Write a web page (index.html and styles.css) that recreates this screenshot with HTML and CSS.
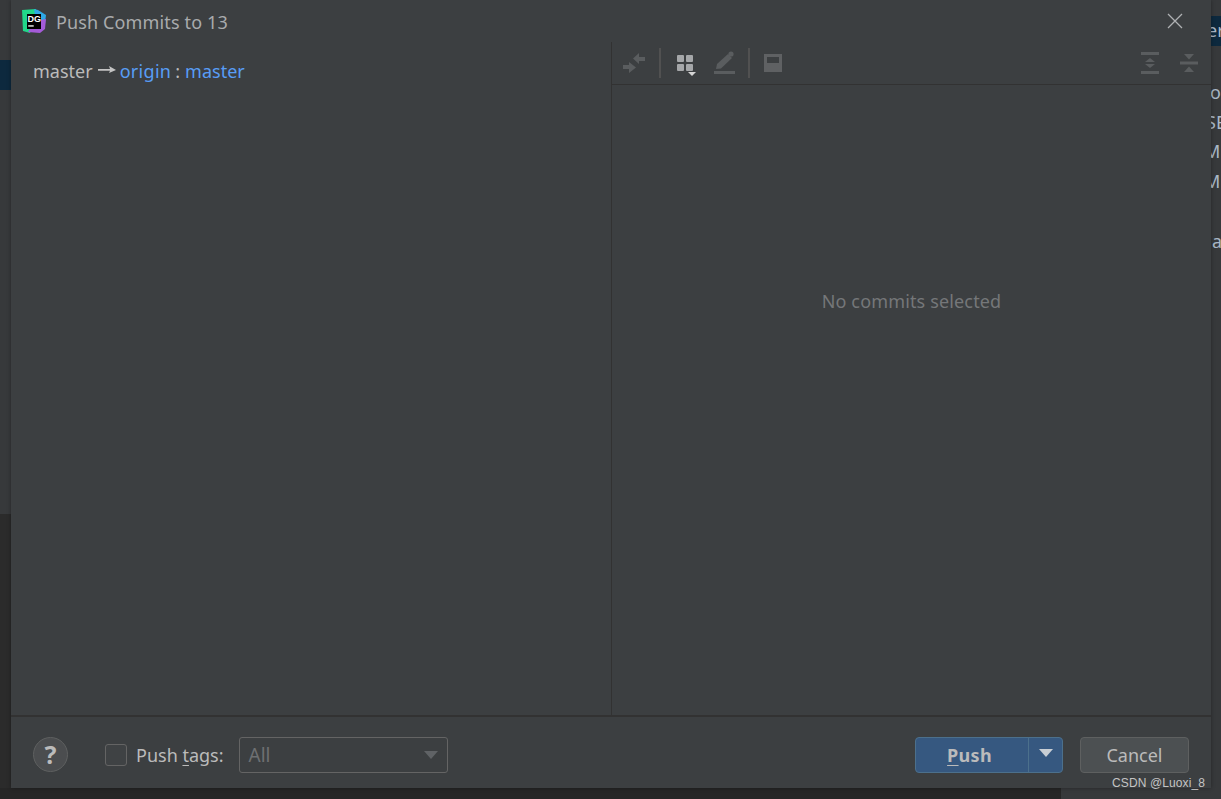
FILE: index.html
```html
<!DOCTYPE html>
<html lang="en">
<head>
<meta charset="utf-8">
<title>Push Commits to 13</title>
<link rel="stylesheet" href="styles.css">
</head>
<body>
<div class="desktop">
  <div class="bg-left-select"></div>
  <div class="bg-left-dark"></div>
  <div class="bg-bottom-dark"></div>
  <div class="bg-right-select"><span>er</span></div>
  <div class="bg-right-text bg-t1">o</div>
  <div class="bg-right-text bg-t2">SE</div>
  <div class="bg-right-text bg-t3">M</div>
  <div class="bg-right-text bg-t4">M</div>
  <div class="bg-right-text bg-t5">a</div>

  <main class="dialog">
    <header class="titlebar">
      <svg class="logo" width="24" height="24" viewBox="0 0 24 24">
        <polygon points="0,1 14,0 14,12 8,24 1,22" fill="#21d789"/>
        <polygon points="12,0 16,1 24,6 23,14 14,12" fill="#2ea8e6"/>
        <polygon points="24,10 23,20 18,24 6,23 14,12" fill="#a45bd8"/>
        <rect x="5" y="5" width="14" height="15" fill="#000"/>
        <text x="5.6" y="13" class="logo-text">DG</text>
        <rect x="6.2" y="16.3" width="5.5" height="1.3" fill="#fff"/>
      </svg>
      <h1 class="title">Push Commits to 13</h1>
      <svg class="close" width="16" height="16" viewBox="0 0 16 16"><path d="M1 1 L15 15 M15 1 L1 15" stroke="#afb1b3" stroke-width="1.3" fill="none"/></svg>
    </header>

    <div class="panes">
      <section class="left-pane">
        <div class="branch-row">
          <span>master</span>
          <svg class="arrow" width="18" height="10" viewBox="0 0 18 10"><path d="M0 4 H12 L11 1 L18 5 L11 8 L12 5.8 H0 Z" fill="#c4c4c4"/></svg>
          <span class="link origin">origin</span>
          <span class="colon">:</span>
          <span class="link">master</span>
        </div>
      </section>
      <section class="right-pane">
        <div class="toolbar">
          <svg class="tool tool-first" width="24" height="24" viewBox="0 0 24 24"><g fill="#5a5d5f"><path d="M10 7.5 L16 2 V6 H22 V10 H16 V13 Z"/><path d="M13 16.5 L6 11 V14 H0 V18 H6 V22 Z"/></g></svg>
          <span class="sep"></span>
          <svg class="tool tool-group" width="22" height="24" viewBox="0 0 22 24"><g fill="#a5a7a9"><rect x="2" y="3" width="7" height="7" rx="1"/><rect x="11" y="3" width="7" height="7" rx="1"/><rect x="2" y="12" width="7" height="7" rx="1"/><rect x="11" y="12" width="7" height="7" rx="1"/></g><polygon points="13,20 21,20 17,24" fill="#d5d5d5"/></svg>
          <svg class="tool tool-edit" width="24" height="24" viewBox="0 0 24 24"><g fill="#5a5d5f"><rect x="2" y="20" width="21" height="3"/><path d="M4 18 L5 13 L16 3 L20 7 L9 17.5 Z"/><circle cx="19" cy="3" r="2.6"/></g></svg>
          <span class="sep sep-b"></span>
          <svg class="tool tool-save" width="18" height="18" viewBox="0 0 18 18"><path fill="#5f6163" fill-rule="evenodd" d="M0 0 H18 V18 H0 Z M3 3 V9 H15 V3 Z"/></svg>
          <span class="spacer"></span>
          <svg class="tool tool-expand" width="18" height="22" viewBox="0 0 18 22"><g fill="#5a5d5f"><rect width="18" height="3"/><rect y="19" width="18" height="3"/><polygon points="9,6 14,10 4,10"/><polygon points="9,16 14,12 4,12"/></g></svg>
          <svg class="tool tool-collapse" width="18" height="20" viewBox="0 0 18 20"><g fill="#5a5d5f"><rect y="8.5" width="18" height="3"/><polygon points="4,1 14,1 9,6.5"/><polygon points="4,19 14,19 9,13.5"/></g></svg>
        </div>
        <div class="empty">No commits selected</div>
      </section>
    </div>

    <footer class="footer">
      <button class="help" type="button">?</button>
      <label class="tags">
        <span class="checkbox"></span>
        <span>Push <u>t</u>ags:</span>
      </label>
      <div class="select"><span>All</span><span class="select-caret"></span></div>
      <span class="spacer"></span>
      <div class="push">
        <button class="push-main" type="button"><u>P</u>ush</button>
        <button class="push-more" type="button"><span class="push-caret"></span></button>
      </div>
      <button class="cancel" type="button">Cancel</button>
    </footer>
  </main>
  <div class="watermark">CSDN @Luoxi_8</div>
</div>
</body>
</html>
```
FILE: styles.css
```css
* { box-sizing: border-box; }
html, body { margin: 0; padding: 0; }
body {
  width: 1221px;
  height: 799px;
  overflow: hidden;
  font-family: "Noto Sans", "Open Sans", sans-serif;
  color: #bbbbbb;
}
.desktop {
  position: relative;
  width: 1221px;
  height: 799px;
  background: #37393b;
  overflow: hidden;
}
.bg-left-select { position: absolute; left: 0; top: 60px; width: 11px; height: 30px; background: #0d293e; }
.bg-left-dark { position: absolute; left: 0; top: 514px; width: 11px; height: 285px; background: #2b2b2b; }
.bg-bottom-dark { position: absolute; left: 0; top: 788px; width: 1061px; height: 11px; background: #262626; }
.bg-right-select { position: absolute; left: 1211px; top: 16px; width: 10px; height: 30px; background: #0d293e; overflow: hidden; }
.bg-right-select span { position: absolute; left: -4px; top: 2px; font-size: 18px; color: #a9b7c6; }
.bg-right-text { position: absolute; font-size: 18px; line-height: 24px; color: #a9b7c6; }
.bg-t1 { top: 80px; left: 1210px; }
.bg-t2 { top: 110px; left: 1206px; }
.bg-t3 { top: 139px; left: 1204px; }
.bg-t4 { top: 169px; left: 1204px; }
.bg-t5 { top: 229px; left: 1212px; }

.dialog {
  position: absolute;
  left: 11px;
  top: 0;
  width: 1200px;
  height: 788px;
  background: #3c3f41;
  display: flex;
  flex-direction: column;
  box-shadow: 0 0 4px rgba(0, 0, 0, .35);
}
.titlebar {
  height: 42px;
  flex: none;
  display: flex;
  align-items: center;
  padding: 0 28px 0 11px;
}
.logo { flex: none; }
.logo-text { font-family: "Liberation Sans", sans-serif; font-size: 9px; font-weight: 700; fill: #fff; }
.title {
  margin: 2px 0 0 10px;
  font-size: 18px;
  letter-spacing: .13px;
  font-weight: 400;
  color: #a9abad;
  flex: 1;
}
.close { flex: none; margin-top: -1px; }

.panes { flex: 1; display: flex; min-height: 0; }
.left-pane { width: 601px; flex: none; border-right: 1px solid #323232; padding: 15px 0 0 22px; }
.branch-row { display: flex; align-items: center; height: 28px; font-size: 18px; color: #bbbbbb; }
.arrow { margin: 0 4px 0 5px; position: relative; top: -1px; }
.link { color: #589df6; }
.origin { letter-spacing: .3px; }
.colon { margin: 0 5px 0 4px; }

.right-pane { flex: 1; display: flex; flex-direction: column; min-width: 0; }
.toolbar {
  height: 43px;
  flex: none;
  border-bottom: 1px solid #323232;
  display: flex;
  align-items: center;
  padding: 0 13px 0 11px;
}
.tool { flex: none; }
.sep { width: 2px; height: 30px; background: #515151; margin: 0 14px 0 12px; flex: none; }
.sep-b { margin: 0 14px 0 12px; }
.tool-group { margin: 1px 15px 0 0; }
.spacer { flex: 1; }
.tool-expand { margin-right: 21px; }
.empty {
  flex: 1;
  display: flex;
  align-items: center;
  justify-content: center;
  font-size: 18px;
  letter-spacing: .15px;
  color: #757779;
  padding-bottom: 199px;
}

.footer {
  height: 73px;
  flex: none;
  border-top: 2px solid #323232;
  display: flex;
  align-items: center;
  padding: 4px 22px 0 22px;
  font-size: 18px;
}
.help {
  width: 35px;
  height: 35px;
  border-radius: 50%;
  border: 1px solid #5e6060;
  background: #4b4d4f;
  color: #bbbbbb;
  font: 700 25px/1 "Noto Sans", sans-serif;
  padding: 0;
  flex: none;
}
.tags { display: flex; align-items: center; margin-left: 37px; color: #bbbbbb; flex: none; }
.checkbox { width: 22px; height: 22px; border: 1px solid #646464; border-radius: 3px; background: #3f4244; margin-right: 9px; }
.tags u { text-underline-offset: 3px; }
.select {
  width: 209px;
  height: 36px;
  margin-left: 15px;
  border: 1px solid #646464;
  border-radius: 3px;
  display: flex;
  align-items: center;
  justify-content: space-between;
  padding: 0 9px 0 9px;
  color: #6e7072;
  flex: none;
}
.select span:first-child { font-size: 19px; }
.select-caret { width: 0; height: 0; border: 7px solid transparent; border-top: 8px solid #606366; border-bottom: 0; }
.push {
  width: 148px;
  height: 36px;
  display: flex;
  background: #365880;
  border: 1px solid #4c708c;
  border-radius: 4px;
  flex: none;
}
.push-main, .push-more { background: none; border: 0; padding: 0; font: inherit; }
.push-main { width: 113px; padding-right: 5px; font-weight: 700; letter-spacing: .3px; color: #bbbbbb; border-right: 1px solid #4c708c; }
.push-main u { text-underline-offset: 3px; }
.push-more { flex: 1; display: flex; align-items: center; justify-content: center; }
.push-caret { width: 0; height: 0; border: 7px solid transparent; border-top: 8px solid #c8ced4; border-bottom: 0; margin-top: -3px; }
.cancel {
  width: 109px;
  height: 36px;
  margin-left: 17px;
  background: #4c5052;
  border: 1px solid #5e6060;
  border-radius: 4px;
  font: inherit;
  color: #bbbbbb;
  padding: 0;
  flex: none;
}
.watermark {
  position: absolute;
  left: 1112px;
  top: 775px;
  font: 12px/16px "Liberation Sans", sans-serif;
  letter-spacing: .12px;
  color: #c4c4c4;
}
```
